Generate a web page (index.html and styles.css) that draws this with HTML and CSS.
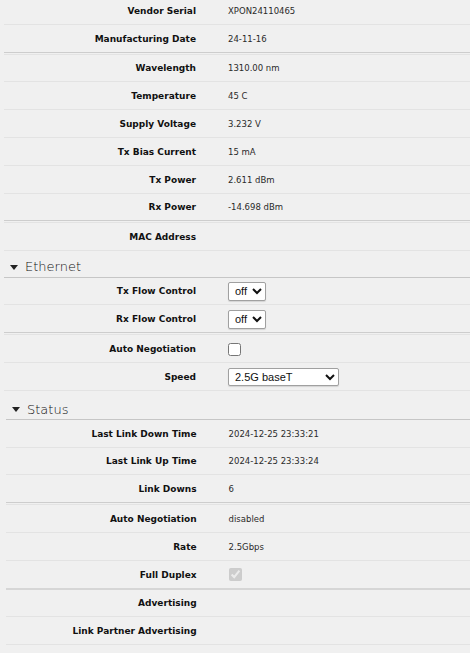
FILE: index.html
```html
<!DOCTYPE html>
<html>
<head>
<meta charset="utf-8">
<link rel="stylesheet" href="styles.css">
</head>
<body>
<div class="page">
  <div class="group first">
    <div class="row"><div class="lbl">Vendor Serial</div><div class="val">XPON24110465</div></div>
    <div class="row last"><div class="lbl">Manufacturing Date</div><div class="val">24-11-16</div></div>
  </div>
  <div class="group">
    <div class="row"><div class="lbl">Wavelength</div><div class="val">1310.00 nm</div></div>
    <div class="row"><div class="lbl">Temperature</div><div class="val">45 C</div></div>
    <div class="row"><div class="lbl">Supply Voltage</div><div class="val">3.232 V</div></div>
    <div class="row"><div class="lbl">Tx Bias Current</div><div class="val">15 mA</div></div>
    <div class="row"><div class="lbl">Tx Power</div><div class="val">2.611 dBm</div></div>
    <div class="row last"><div class="lbl">Rx Power</div><div class="val">-14.698 dBm</div></div>
  </div>
  <div class="group nosep">
    <div class="row"><div class="lbl">MAC Address</div><div class="val"></div></div>
  </div>

  <div class="head eth"><svg class="tri" width="8" height="5" viewBox="0 0 8 5"><path d="M0 0H8L4 5Z" fill="#222"/></svg><span>Ethernet</span></div>
  <div class="group">
    <div class="row"><div class="lbl">Tx Flow Control</div><div class="val"><select class="sel small"><option>off</option></select></div></div>
    <div class="row last"><div class="lbl">Rx Flow Control</div><div class="val"><select class="sel small"><option>off</option></select></div></div>
  </div>
  <div class="group nosep">
    <div class="row"><div class="lbl">Auto Negotiation</div><div class="val"><input type="checkbox" class="chk"></div></div>
    <div class="row"><div class="lbl">Speed</div><div class="val"><select class="sel wide"><option>2.5G baseT</option></select></div></div>
  </div>

  <div class="status">
    <div class="head st"><svg class="tri" width="8" height="5" viewBox="0 0 8 5"><path d="M0 0H8L4 5Z" fill="#222"/></svg><span>Status</span></div>
    <div class="group">
      <div class="row"><div class="lbl">Last Link Down Time</div><div class="val">2024-12-25 23:33:21</div></div>
      <div class="row"><div class="lbl">Last Link Up Time</div><div class="val">2024-12-25 23:33:24</div></div>
      <div class="row last"><div class="lbl">Link Downs</div><div class="val">6</div></div>
    </div>
    <div class="group thick">
      <div class="row"><div class="lbl">Auto Negotiation</div><div class="val">disabled</div></div>
      <div class="row"><div class="lbl">Rate</div><div class="val">2.5Gbps</div></div>
      <div class="row last"><div class="lbl">Full Duplex</div><div class="val"><input type="checkbox" class="chk" checked disabled></div></div>
    </div>
    <div class="group nosep">
      <div class="row"><div class="lbl">Advertising</div><div class="val"></div></div>
      <div class="row"><div class="lbl">Link Partner Advertising</div><div class="val"></div></div>
    </div>
  </div>
</div>
</body>
</html>
```

FILE: styles.css
```css
html, body {
  margin: 0;
  padding: 0;
  background: #f0f0f0;
}
body {
  width: 470px;
  height: 653px;
  overflow: hidden;
  font-family: "DejaVu Sans", Verdana, sans-serif;
}
.page {
  margin-top: -3px;
}
.group {
  margin-left: 4px;
  border-bottom: 1px solid #e3e3e3;
  padding-bottom: 1px;
}
.group .row {
  height: 26.8px;
  border-bottom: 1px solid #e3e3e3;
  display: grid;
  grid-template-columns: 192px 1fr;
  column-gap: 32px;
  align-items: center;
}
.group .row.last {
  border-bottom: 1px solid #cdcdcd;
}
.group.nosep {
  border-bottom: none;
  padding-bottom: 0;
}
.group.thick {
  padding-bottom: 0;
  border-bottom: 1px solid #d6d6d6;
}
.group.thick .row.last {
  border-bottom: 1px solid #d6d6d6;
}
.lbl {
  text-align: right;
  font-weight: bold;
  font-size: 9px;
  color: #111;
  padding-top: 1px;
}
.val {
  font-size: 8.5px;
  color: #2a2a2a;
  display: flex;
  align-items: center;
  padding-top: 1px;
}
.head {
  margin-left: 4px;
  display: flex;
  align-items: center;
  gap: 7px;
  padding-left: 6px;
  border-bottom: 1px solid #c6c6c6;
  font-family: "DejaVu Sans", sans-serif;
  font-weight: 200;
  font-size: 13px;
  color: #111;
  line-height: 16px;
  box-sizing: border-box;
}
.head.eth {
  height: 26.4px;
  padding-top: 7px;
}
.head.st {
  height: 29px;
  padding-top: 10px;
}
.status .head, .status .group {
  margin-left: 6px;
}
.status .group .row {
  grid-template-columns: 190.6px 1fr;
}
.tri {
  flex: none;
}
.sel {
  font-family: "Liberation Sans", Arial, sans-serif;
  font-size: 11px;
  height: 19px;
  padding: 0 0 0 2px;
  margin: 0;
  background: #fff;
  color: #111;
  border: 1px solid #a0a0a0;
  border-radius: 2px;
  box-shadow: 0 1px 1px rgba(0,0,0,0.12);
}
.sel.small { width: 38px; }
.sel.wide { width: 111px; height: 18px; }
.chk {
  margin: 0;
  width: 13px;
  height: 13px;
}
```
